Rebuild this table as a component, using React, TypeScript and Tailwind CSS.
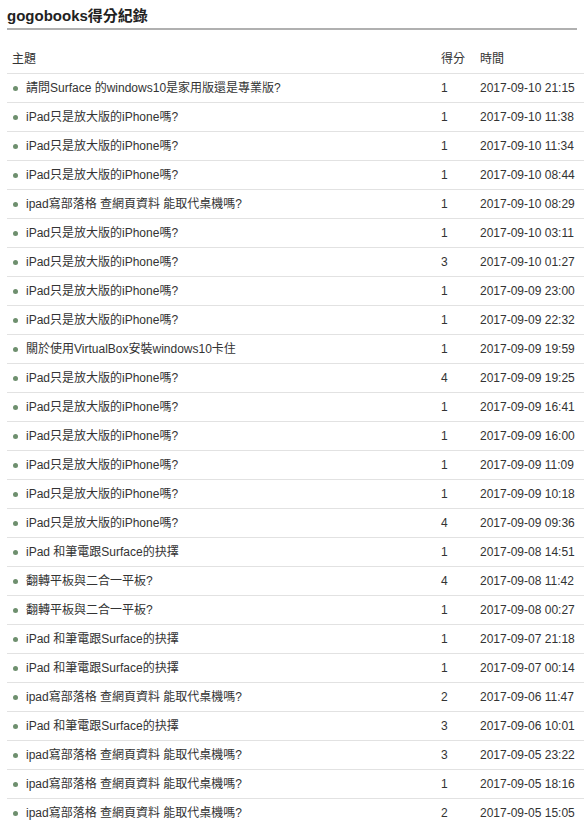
const rows: [string, number, string][] = [
  ['請問Surface 的windows10是家用版還是專業版?', 1, '2017-09-10 21:15'],
  ['iPad只是放大版的iPhone嗎?', 1, '2017-09-10 11:38'],
  ['iPad只是放大版的iPhone嗎?', 1, '2017-09-10 11:34'],
  ['iPad只是放大版的iPhone嗎?', 1, '2017-09-10 08:44'],
  ['ipad寫部落格 查網頁資料 能取代桌機嗎?', 1, '2017-09-10 08:29'],
  ['iPad只是放大版的iPhone嗎?', 1, '2017-09-10 03:11'],
  ['iPad只是放大版的iPhone嗎?', 3, '2017-09-10 01:27'],
  ['iPad只是放大版的iPhone嗎?', 1, '2017-09-09 23:00'],
  ['iPad只是放大版的iPhone嗎?', 1, '2017-09-09 22:32'],
  ['關於使用VirtualBox安裝windows10卡住', 1, '2017-09-09 19:59'],
  ['iPad只是放大版的iPhone嗎?', 4, '2017-09-09 19:25'],
  ['iPad只是放大版的iPhone嗎?', 1, '2017-09-09 16:41'],
  ['iPad只是放大版的iPhone嗎?', 1, '2017-09-09 16:00'],
  ['iPad只是放大版的iPhone嗎?', 1, '2017-09-09 11:09'],
  ['iPad只是放大版的iPhone嗎?', 1, '2017-09-09 10:18'],
  ['iPad只是放大版的iPhone嗎?', 4, '2017-09-09 09:36'],
  ['iPad 和筆電跟Surface的抉擇', 1, '2017-09-08 14:51'],
  ['翻轉平板與二合一平板?', 4, '2017-09-08 11:42'],
  ['翻轉平板與二合一平板?', 1, '2017-09-08 00:27'],
  ['iPad 和筆電跟Surface的抉擇', 1, '2017-09-07 21:18'],
  ['iPad 和筆電跟Surface的抉擇', 1, '2017-09-07 00:14'],
  ['ipad寫部落格 查網頁資料 能取代桌機嗎?', 2, '2017-09-06 11:47'],
  ['iPad 和筆電跟Surface的抉擇', 3, '2017-09-06 10:01'],
  ['ipad寫部落格 查網頁資料 能取代桌機嗎?', 3, '2017-09-05 23:22'],
  ['ipad寫部落格 查網頁資料 能取代桌機嗎?', 1, '2017-09-05 18:16'],
  ['ipad寫部落格 查網頁資料 能取代桌機嗎?', 2, '2017-09-05 15:05'],
];

export default function App() {
  return (
    <div
      className="bg-white pl-[7px] text-[#333] h-[824px] overflow-hidden"
      style={{ fontFamily: '"Liberation Sans", Arial, "Noto Sans CJK TC", sans-serif' }}
    >
      <h1 className="mr-[7px] pt-[7px] pb-[3px] text-[15px] leading-[18px] font-bold text-[#222] border-b-2 border-[#b0b0b0]">
        gogobooks得分紀錄
      </h1>

      <div className="mt-[14px] text-[12px]">
        <div className="flex items-center h-[30px] border-b border-[#e2e2e2]">
          <div className="flex-1 pl-[5px]">主題</div>
          <div className="w-[39px]">得分</div>
          <div className="w-[104px]">時間</div>
        </div>
        {rows.map(([title, score, time], i) => (
          <div key={i} className="flex items-center h-[29px] border-b border-[#e2e2e2]">
            <div className="flex-1 pl-[6px] flex items-center">
              <span className="w-[5px] h-[5px] rounded-full bg-[#6e8f6e] mr-[8px]" />
              <span>{title}</span>
            </div>
            <div className="w-[39px]">{score}</div>
            <div className="w-[104px]">{time}</div>
          </div>
        ))}
      </div>
    </div>
  );
}
